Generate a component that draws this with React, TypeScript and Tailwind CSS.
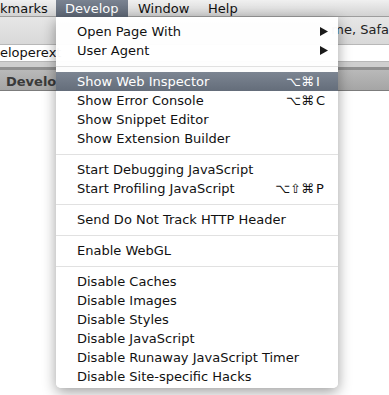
import React from 'react';

type Item =
  | { kind: 'item'; label: string; mods?: string; key?: string; submenu?: boolean; active?: boolean }
  | { kind: 'sep' };

const items: Item[] = [
  { kind: 'item', label: 'Open Page With', submenu: true },
  { kind: 'item', label: 'User Agent', submenu: true },
  { kind: 'sep' },
  { kind: 'item', label: 'Show Web Inspector', mods: '⌥⌘', key: 'I', active: true },
  { kind: 'item', label: 'Show Error Console', mods: '⌥⌘', key: 'C' },
  { kind: 'item', label: 'Show Snippet Editor' },
  { kind: 'item', label: 'Show Extension Builder' },
  { kind: 'sep' },
  { kind: 'item', label: 'Start Debugging JavaScript' },
  { kind: 'item', label: 'Start Profiling JavaScript', mods: '⌥⇧⌘', key: 'P' },
  { kind: 'sep' },
  { kind: 'item', label: 'Send Do Not Track HTTP Header' },
  { kind: 'sep' },
  { kind: 'item', label: 'Enable WebGL' },
  { kind: 'sep' },
  { kind: 'item', label: 'Disable Caches' },
  { kind: 'item', label: 'Disable Images' },
  { kind: 'item', label: 'Disable Styles' },
  { kind: 'item', label: 'Disable JavaScript' },
  { kind: 'item', label: 'Disable Runaway JavaScript Timer' },
  { kind: 'item', label: 'Disable Site-specific Hacks' },
];

function Arrow() {
  return (
    <svg width="8" height="9" viewBox="0 0 8 9" className="mr-[10px]">
      <path d="M0 0 L8 4.5 L0 9 Z" fill="#1a1a1a" />
    </svg>
  );
}

export default function App() {
  return (
    <div
      className="relative w-[389px] h-[395px] overflow-hidden bg-white text-[13px] text-[#111]"
      style={{ fontFamily: '"DejaVu Sans", "Lucida Grande", sans-serif' }}
    >
      {/* Menu bar */}
      <div className="h-[17px] flex items-center bg-gradient-to-b from-[#f0f0f0] to-[#d2d2d2] border-b border-[#9d9d9d]">
        <span className="w-[56px] leading-[17px] whitespace-nowrap">kmarks</span>
        <span className="w-[72px] pl-[9px] leading-[17px] h-[17px] bg-gradient-to-b from-[#7a8391] to-[#5d6674] text-white">
          Develop
        </span>
        <span className="w-[70px] pl-[10px] leading-[17px]">Window</span>
        <span className="pl-[10px] leading-[17px]">Help</span>
      </div>

      {/* Window title / toolbar */}
      <div className="h-[27px] flex items-center justify-end pb-[2px] bg-gradient-to-b from-[#e6e6e6] to-[#d9d9d9]">
        <span className="text-[#222]">me, Safa</span>
      </div>

      {/* Address row */}
      <div className="h-[18px] flex items-center bg-white border-y border-[#b8b8b8]">
        <span className="text-[#111]">eloperext</span>
      </div>
      <div className="h-[5px] bg-[#cfcfcf]" />

      {/* Tab bar */}
      <div className="h-[24px] flex items-center pt-[3px] bg-gradient-to-b from-[#b9b9b9] to-[#a5a5a5] border-t-[3px] border-[#909090] border-b border-b-[#7c7c7c]">
        <span className="pl-[6px] font-bold text-[#3a3a3a]">Develope</span>
      </div>

      {/* Develop menu */}
      <div className="absolute left-[56px] top-[17px] w-[282px] pt-[5px] pb-[2px] bg-white/[0.97] rounded-b-[5px] shadow-[0_4px_14px_rgba(0,0,0,0.38)]">
        {items.map((it, i) =>
          it.kind === 'sep' ? (
            <div key={i} className="h-[12px] flex items-center">
              <div className="h-px w-full bg-[#e1e1e1]" />
            </div>
          ) : (
            <div
              key={i}
              className={`h-[19px] flex items-center justify-between pl-[21px] ${
                it.active ? 'bg-gradient-to-b from-[#7c8592] to-[#646d7a] text-white' : ''
              }`}
            >
              <span>{it.label}</span>
              {it.submenu && <Arrow />}
              {it.key && (
                <span className="flex items-center">
                  <span className="pr-[2px]">{it.mods}</span>
                  <span className="w-[22px]">{it.key}</span>
                </span>
              )}
            </div>
          )
        )}
      </div>
    </div>
  );
}
